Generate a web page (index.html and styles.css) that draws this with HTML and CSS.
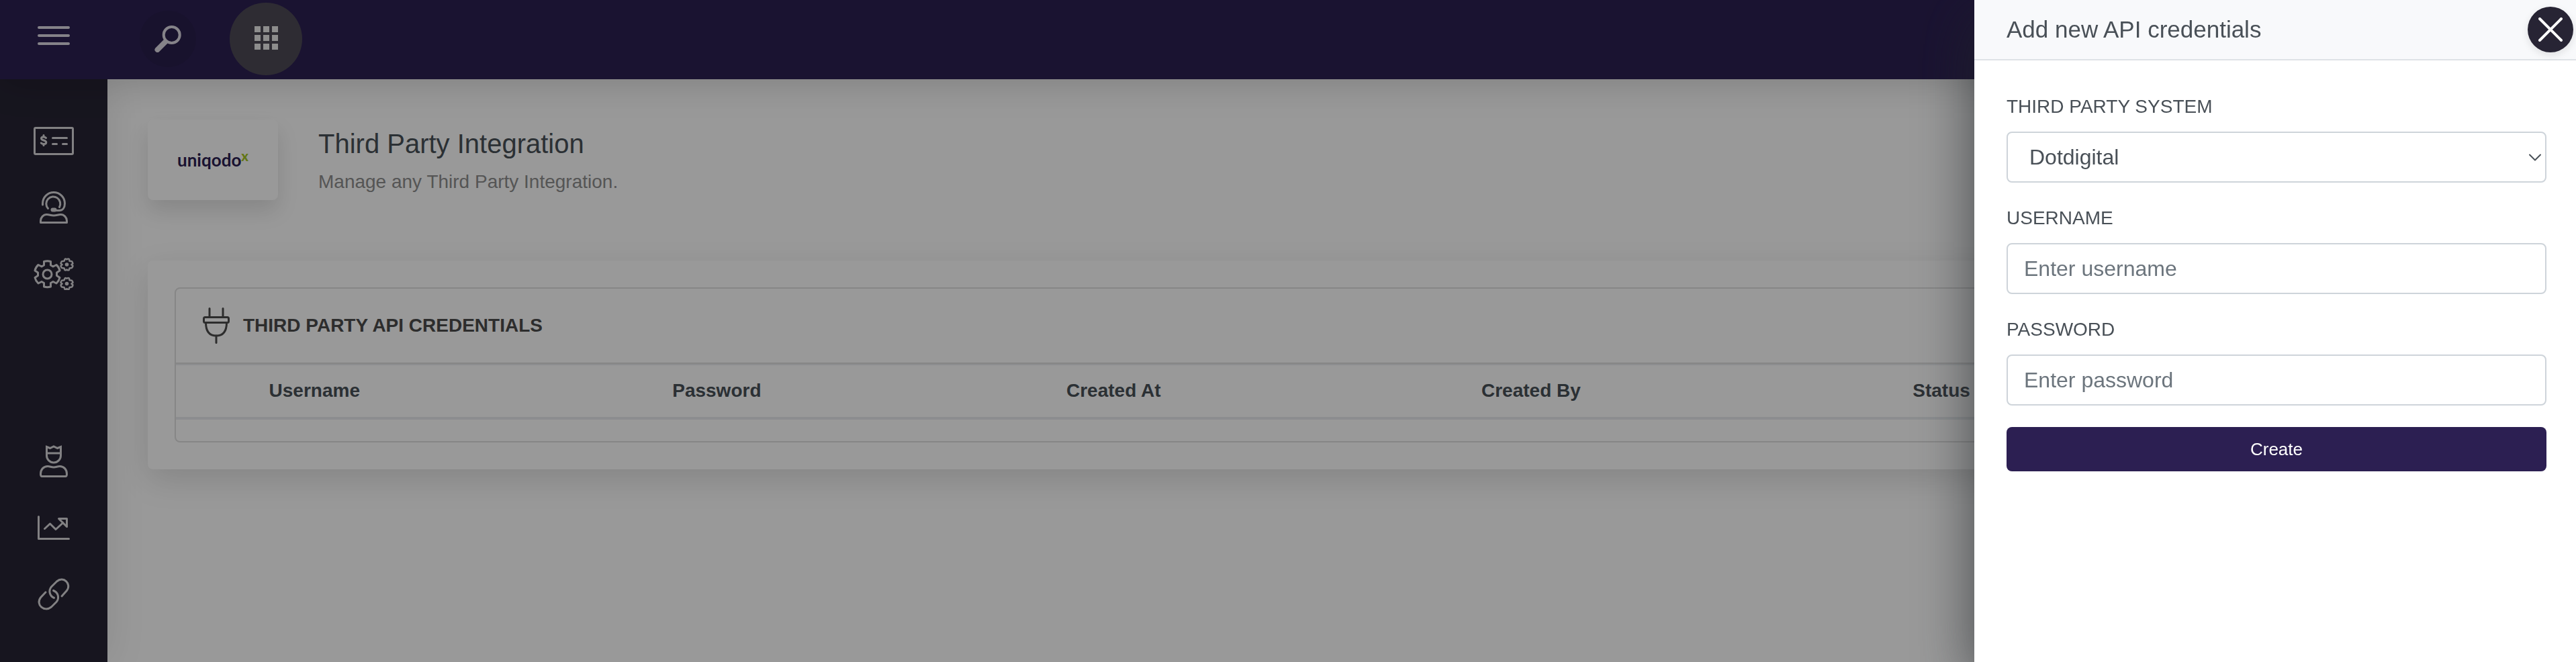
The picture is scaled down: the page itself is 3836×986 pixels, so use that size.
FILE: index.html
```html
<!DOCTYPE html>
<html lang="en">
<head>
<meta charset="utf-8">
<title>Third Party Integration</title>
<link rel="stylesheet" href="styles.css">
</head>
<body>
<div class="app">
  <header class="topbar">
    <button class="menu-button" type="button" aria-label="Toggle menu">
      <svg width="48" height="28" viewBox="0 0 48 28" stroke="currentColor" stroke-width="4" stroke-linecap="round"><path d="M2 2H46M2 14H46M2 26H46"/></svg>
    </button>
    <button class="search-button" type="button" aria-label="Search">
      <svg width="40" height="40" viewBox="0 0 40 40" fill="none" stroke="currentColor"><circle cx="25.700" cy="14" r="12" stroke-width="4"/><path d="M16 24.500L4.500 36" stroke-width="8" stroke-linecap="round"/></svg>
    </button>
    <button class="apps-button" type="button" aria-label="Applications">
      <svg width="35" height="35" viewBox="0 0 35 35" fill="currentColor"><path d="M0 0h9v9H0zM13 0h9v9h-9zM26 0h9v9h-9zM0 13h9v9H0zM13 13h9v9h-9zM26 13h9v9h-9zM0 26h9v9H0zM13 26h9v9h-9zM26 26h9v9h-9z"/></svg>
    </button>
  </header>

  <div class="body">
    <nav class="sidebar" aria-label="Main">
      <div class="nav-group">
        <a class="nav-link" href="#billing" aria-label="Billing">
          <svg width="60" height="42" viewBox="0 0 60 42" fill="none" stroke="currentColor" stroke-width="3" stroke-linecap="round" stroke-linejoin="round"><rect x="1.500" y="1.500" width="57" height="39" rx="1.500"/><path d="M28.500 16.500H49.500M28.500 25.500H34.500M43.500 25.500H49.500"/><path d="M18.500 16.500C17 14.500 11.500 14 11.500 17.200C11.500 20.500 18.800 19.500 18.800 23C18.800 26.500 13 26 11.300 24M15 12.500V14.500M15 26V27.500"/></svg>
        </a>
        <a class="nav-link" href="#support" aria-label="Support">
          <svg width="42" height="48" viewBox="0 0 42 48" fill="none" stroke="currentColor" stroke-width="3" stroke-linecap="round" stroke-linejoin="round"><path d="M4.500 20V18A16.500 16.500 0 0 1 37.500 18C37.500 24 34.500 28.500 29 28.500H21"/><path d="M12.500 25.500A10.500 10.500 0 1 1 29.500 23.500"/><path d="M19.500 27.500H22.500" stroke-width="6"/><path d="M1.500 46.500V44C1.500 39 5.500 34.500 10.500 34.500C15 34.500 16 36 21 36S27 34.500 31.500 34.500C36.500 34.500 40.500 39 40.500 44V46.500Z"/></svg>
        </a>
        <a class="nav-link" href="#settings" aria-label="Settings">
          <svg width="60" height="48" viewBox="0 0 60 48" fill="none" stroke="currentColor" stroke-width="3" stroke-linejoin="round"><path d="M15.500 5.500Q20.500 4 25.500 5.500V11L29 13L34 10.500Q38 14 39 19L34.500 22V26.500L39 29.500Q38 34 34 38L29 35.500L25.500 37.500V43Q20.500 44.500 15.500 43V37.500L12 35.500L7 38Q3 34 2 29.500L6.500 26.500V22L2 19Q3 14 7 10.500L12 13L15.500 11Z"/><circle cx="20.500" cy="24.500" r="6.500"/><g stroke-width="2.500"><path id="cog" d="M46.800 1.800Q47.800 1.200 48.600 1.800Q49.500 3 50.500 1.800Q51.500 1.200 53 2L53.500 4.800L56.800 5.200Q58.500 7 58.500 8.500L56.500 10L58.500 12Q58.500 13.500 56.800 15L53.500 15.500L52.800 18.200Q51 19 49.500 17.500Q48 19 46.500 18.200L45.500 15.500L42.200 15Q40.500 13.500 40.500 12L42.500 10L40.500 8.500Q40.500 7 42.200 5.200L45.500 4.800Z"/><use href="#cog" y="28.500"/></g><g fill="currentColor" stroke="none"><circle cx="49.500" cy="10" r="2.800"/><circle cx="49.500" cy="38.500" r="2.800"/></g></svg>
        </a>
      </div>
      <div class="nav-group">
        <a class="nav-link" href="#account" aria-label="Account">
          <svg width="42" height="48" viewBox="0 0 42 48" fill="none" stroke="currentColor" stroke-width="3"><path d="M10.500 2.500L15.500 4.500L21 2L26.500 4.500L31.500 2.500V15.500A10.500 10.500 0 0 1 10.500 15.500ZM10.500 12H31.500"/><path stroke-linejoin="round" d="M3.500 46.500Q1.500 46.500 1.500 43C1.500 36 6 31.500 12 31.500C16 31.500 17 33 21 33S26 31.500 30 31.500C36 31.500 40.500 36 40.500 43Q40.500 46.500 38.500 46.500Z"/></svg>
        </a>
        <a class="nav-link" href="#reports" aria-label="Reports">
          <svg width="48" height="36" viewBox="0 0 48 36" fill="none" stroke="currentColor" stroke-width="3" stroke-linecap="round" stroke-linejoin="round"><path d="M1.500 1.500V34.500H46.500M10.500 19.500L18.500 12L27 20.500L38 10.500M31.500 4.500H43.500V16.500Z"/></svg>
        </a>
        <a class="nav-link" href="#links" aria-label="Links">
          <svg width="48" height="48" viewBox="0 0 48 48" fill="none" stroke="currentColor" stroke-width="3" stroke-linecap="round"><path d="M24.500 29.500C17.500 26.500 16 18.500 20.500 13L28.500 5C38.500-3.500 51 8.500 43.500 18.500L36 27"/><path d="M23.500 18.500C30.500 21.500 33 29.500 28 35.500L20.500 43C10 51.500-3.500 39.500 4.500 29L12 21"/></svg>
        </a>
      </div>
    </nav>

    <main class="content">
      <section class="page-head">
        <div class="brand">
          <span class="wordmark">uniqodo<sup>x</sup></span>
        </div>
        <div class="page-title">
          <h1>Third Party Integration</h1>
          <p>Manage any Third Party Integration.</p>
        </div>
      </section>

      <section class="panel">
        <div class="card">
          <div class="card-header">
            <svg width="40" height="54" viewBox="0 0 40 54" fill="none" stroke="currentColor" stroke-width="3" stroke-linecap="round" stroke-linejoin="round"><path d="M10 1.500V14M30 1.500V14M20 42V52.500"/><rect x="1.500" y="14.500" width="37" height="8" rx="2"/><path d="M4.500 22.500C4.500 34 9 42 20 42S35.500 34 35.500 22.500"/></svg>
            <h2>THIRD PARTY API CREDENTIALS</h2>
          </div>
          <div class="table-wrap">
            <table>
              <colgroup><col class="col-action"><col class="col-username"><col class="col-password"><col class="col-created-at"><col class="col-created-by"><col></colgroup>
              <thead>
                <tr><td></td><th scope="col">Username</th><th scope="col">Password</th><th scope="col">Created At</th><th scope="col">Created By</th><th scope="col">Status</th></tr>
              </thead>
              <tbody></tbody>
            </table>
          </div>
        </div>
      </section>
    </main>
  </div>
</div>

<div class="overlay"></div>

<aside class="drawer" aria-labelledby="drawer-title">
  <header class="drawer-header">
    <h2 id="drawer-title">Add new API credentials</h2>
    <button class="close-button" type="button" aria-label="Close">
      <svg width="36" height="36" viewBox="0 0 36 36" stroke="currentColor" stroke-width="4" stroke-linecap="round"><path d="M2 2L34 34M34 2L2 34"/></svg>
    </button>
  </header>
  <form class="drawer-form">
    <div class="field">
      <label for="system">THIRD PARTY SYSTEM</label>
      <div class="select-wrap">
        <select id="system"><option>Dotdigital</option></select>
        <svg class="chevron" width="18" height="11" viewBox="0 0 18 11" fill="none" stroke="currentColor" stroke-width="2" stroke-linecap="round" stroke-linejoin="round"><path d="M1 1.500L9 9.500L17 1.500"/></svg>
      </div>
    </div>
    <div class="field">
      <label for="username">USERNAME</label>
      <input id="username" type="text" placeholder="Enter username">
    </div>
    <div class="field">
      <label for="password">PASSWORD</label>
      <input id="password" type="password" placeholder="Enter password">
    </div>
    <button class="submit-button" type="button">Create</button>
  </form>
</aside>
</body>
</html>
```
FILE: styles.css
```css
* { box-sizing: border-box; }

body {
  margin: 0;
  font-family: "Liberation Sans", Arial, sans-serif;
  font-size: 28px;
  line-height: 42px;
  color: #495057;
  background: #fff;
}

h1, h2, p { margin: 0; }
svg { display: block; }

button {
  display: flex;
  align-items: center;
  justify-content: center;
  padding: 0;
  border: 0;
  font-family: inherit;
  cursor: pointer;
}

.app {
  display: flex;
  flex-direction: column;
  min-height: 100vh;
}

/* Top bar */
.topbar {
  position: relative;
  z-index: 2;
  display: flex;
  align-items: center;
  height: 118px;
  padding-bottom: 2px;
  background: #2c2052;
  box-shadow: 0 0 60px rgba(0, 0, 0, 0.2);
  color: #dedae4;
}

.menu-button {
  width: 160px;
  height: 84px;
  padding-bottom: 10px;
  background: none;
  color: inherit;
}

.search-button {
  width: 84px;
  height: 84px;
  margin-left: 48px;
  border-radius: 50%;
  background: #291e4b;
  color: inherit;
}

.apps-button {
  width: 108px;
  height: 108px;
  margin-left: 50px;
  padding-bottom: 4px;
  border-radius: 50%;
  background: #4e4a56;
  color: #ececec;
}

/* Side navigation */
.body {
  display: flex;
  flex: 1;
}

.sidebar {
  display: flex;
  flex: none;
  flex-direction: column;
  justify-content: space-between;
  width: 160px;
  padding: 42px 0 52px;
  background: #272434;
  box-shadow: 0 0 60px rgba(0, 0, 0, 0.1);
}

.nav-link {
  display: flex;
  align-items: center;
  justify-content: center;
  height: 99px;
  color: #d9d8db;
}

/* Page content */
.content {
  flex: 1;
  min-width: 0;
  padding: 60px;
}

.page-head {
  display: flex;
  gap: 60px;
  margin-bottom: 90px;
}

.brand {
  display: flex;
  align-items: center;
  justify-content: center;
  width: 194px;
  height: 120px;
  border-radius: 8px;
  background: #fff;
  box-shadow: 0 16px 32px rgba(0, 0, 0, 0.12);
}

.wordmark {
  color: #2c1f52;
  font-family: Lato, sans-serif;
  font-size: 26px;
  font-weight: 700;
  line-height: 36px;
}

.wordmark sup {
  color: #a6c626;
  font-size: 20px;
  font-weight: 900;
  line-height: 0;
  vertical-align: 8px;
}

.page-title { padding-top: 12px; }

h1 {
  margin-bottom: 12px;
  font-size: 40px;
  font-weight: 400;
  line-height: 48px;
}

.page-title p { color: #8e8e8e; }

.panel {
  padding: 40px;
  border-radius: 8px;
  background: #fff;
  box-shadow: 0 16px 48px rgba(0, 0, 0, 0.13);
}

.card {
  border: 2px solid #dfdfdf;
  border-radius: 8px;
}

.card-header {
  display: flex;
  align-items: center;
  gap: 20px;
  padding: 28px 40px;
  border-bottom: 2px solid #dfdfdf;
  color: #4c4c4c;
}

.card-header h2 {
  font-size: 28px;
  font-weight: 700;
}

.table-wrap { padding-bottom: 32px; }

table {
  width: 100%;
  table-layout: fixed;
  border-spacing: 0;
}

thead th, thead td {
  padding: 17px 24px 18px;
  border-top: 2px solid #e9ecef;
  border-bottom: 4px solid #e9ecef;
  font-weight: 700;
  text-align: left;
}

.col-action { width: 3.3%; }
.col-username { width: 17.3%; }
.col-password { width: 16.9%; }
.col-created-at { width: 17.8%; }
.col-created-by { width: 18.5%; }

/* Backdrop and drawer lie over the page */
.overlay {
  position: fixed;
  inset: 0;
  z-index: 3;
  background: rgba(0, 0, 0, 0.4);
}

.drawer {
  position: fixed;
  top: 0;
  right: 0;
  bottom: 0;
  z-index: 4;
  width: 896px;
  max-width: 100%;
  background: #fff;
  box-shadow: 0 28px 80px rgba(33, 37, 41, 0.7);
}

.drawer-header {
  display: flex;
  align-items: center;
  justify-content: space-between;
  padding: 10px 4px 10px 48px;
  border-bottom: 2px solid #dee2e6;
  background: #f8f9fb;
}

.drawer-header h2 {
  font-size: 35px;
  font-weight: 400;
}

.close-button {
  width: 68px;
  height: 68px;
  border-radius: 50%;
  background: #272434;
  box-shadow: 0 4px 12px rgba(0, 0, 0, 0.1);
  color: #fff;
}

.drawer-form { padding: 48px 44px 48px 48px; }

.field { margin-bottom: 32px; }

label {
  display: block;
  margin-bottom: 16px;
}

input, select {
  display: block;
  width: 100%;
  height: 76px;
  padding: 0 24px;
  border: 2px solid #ced4da;
  border-radius: 8px;
  background: #fff;
  color: #495057;
  font-family: inherit;
  font-size: 32px;
}

input::placeholder {
  color: #6c757d;
  opacity: 1;
}

.select-wrap { position: relative; }

select {
  padding: 0 32px;
  appearance: none;
}

.chevron {
  position: absolute;
  top: 33px;
  right: 8px;
  pointer-events: none;
}

.submit-button {
  width: 100%;
  height: 66px;
  border-radius: 8px;
  background: #2c1f52;
  color: #fff;
  font-size: 26px;
}
```
